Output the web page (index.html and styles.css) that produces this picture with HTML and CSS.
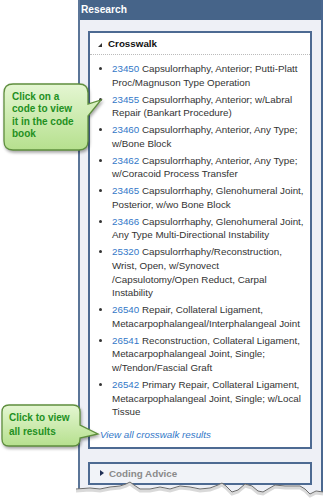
FILE: index.html
```html
<!DOCTYPE html>
<html lang="en">
<head>
    <meta charset="UTF-8">
    <meta name="viewport" content="width=device-width, initial-scale=1.0">
    <title>Research - Crosswalk</title>
    <link rel="stylesheet" href="styles.css">
</head>
<body>
<div class="page">
    <div class="panel">
        <div class="panel-title">Research</div>
        <div class="panel-body">
            <div class="box">
                <div class="box-head"><span class="tri-open"></span>Crosswalk</div>
                <ul class="codes">
                    <li><a href="#">23450</a> Capsulorrhaphy, Anterior; Putti-Platt Proc/Magnuson Type Operation</li>
                    <li><a href="#">23455</a> Capsulorrhaphy, Anterior; w/Labral Repair (Bankart Procedure)</li>
                    <li><a href="#">23460</a> Capsulorrhaphy, Anterior, Any Type; w/Bone Block</li>
                    <li><a href="#">23462</a> Capsulorrhaphy, Anterior, Any Type; w/Coracoid Process Transfer</li>
                    <li><a href="#">23465</a> Capsulorrhaphy, Glenohumeral Joint, Posterior, w/wo Bone Block</li>
                    <li><a href="#">23466</a> Capsulorrhaphy, Glenohumeral Joint, Any Type Multi-Directional Instability</li>
                    <li><a href="#">25320</a> Capsulorrhaphy/Reconstruction, Wrist, Open, w/Synovect<br>/Capsulotomy/Open Reduct, Carpal Instability</li>
                    <li><a href="#">26540</a> Repair, Collateral Ligament, Metacarpophalangeal/Interphalangeal Joint</li>
                    <li><a href="#">26541</a> Reconstruction, Collateral Ligament, Metacarpophalangeal Joint, Single; w/Tendon/Fascial Graft</li>
                    <li><a href="#">26542</a> Primary Repair, Collateral Ligament, Metacarpophalangeal Joint, Single; w/Local Tissue</li>
                </ul>
                <a class="view-all" href="#">View all crosswalk results</a>
            </div>
            <div class="box box-closed">
                <div class="box-head"><span class="tri-closed"></span>Coding Advice</div>
            </div>
        </div>
    </div>

    <!-- notas sobre la captura -->
    <div class="callout callout-code">
        <svg class="callout-shape" width="104" height="72" viewBox="0 0 104 72">
            <defs>
                <linearGradient id="verde1" x1="0" y1="0" x2="0" y2="1">
                    <stop offset="0" stop-color="#e4f6d2"/>
                    <stop offset="1" stop-color="#b6e08e"/>
                </linearGradient>
            </defs>
            <path d="M11,2 H77 Q86,2 86,11 V22 L99,18 L86,34 V59 Q86,68 77,68 H11 Q2,68 2,59 V11 Q2,2 11,2 Z" fill="url(#verde1)" stroke="#5f8f3e" stroke-width="1.3"/>
        </svg>
        <p>Click on a<br>code to view<br>it in the code<br>book</p>
    </div>

    <div class="callout callout-all">
        <svg class="callout-shape" width="104" height="48" viewBox="0 0 104 48">
            <defs>
                <linearGradient id="verde2" x1="0" y1="0" x2="0" y2="1">
                    <stop offset="0" stop-color="#e4f6d2"/>
                    <stop offset="1" stop-color="#b6e08e"/>
                </linearGradient>
            </defs>
            <path d="M9,2 H73 Q80,2 80,9 V22 L98,31 L80,35 V36 Q80,43 73,43 H9 Q2,43 2,36 V9 Q2,2 9,2 Z" fill="url(#verde2)" stroke="#5f8f3e" stroke-width="1.3"/>
        </svg>
        <p>Click to view<br>all results</p>
    </div>

    <!-- borde rasgado -->
    <svg class="torn" width="247" height="26" viewBox="0 0 247 26">
        <path d="M0,11 L14,10 L24,11 L34,9 L44,8 L50,6 L54,4 L58,7 L64,11 L74,11 L84,9 L94,11 L104,8 L114,9 L124,11 L134,10 L142,7 L146,5 L150,8 L156,14 L162,12 L169,6 L176,8 L182,13 L187,14 L192,11 L199,7 L209,8 L224,8 L229,11 L234,16 L240,13 L247,14 L247,26 L0,26 Z" fill="#fff"/>
        <polyline points="0,13 14,12 24,13 34,11 44,10 50,8 54,6 58,9 64,13 74,13 84,11 94,13 104,10 114,11 124,13 134,12 142,9 146,7 150,10 156,16 162,14 169,8 176,10 182,15 187,16 192,13 199,9 209,10 224,10 229,13 234,18 240,15 247,16" fill="none" stroke="rgba(0,0,0,0.15)" stroke-width="3"/>
        <polyline points="0,11 14,10 24,11 34,9 44,8 50,6 54,4 58,7 64,11 74,11 84,9 94,11 104,8 114,9 124,11 134,10 142,7 146,5 150,8 156,14 162,12 169,6 176,8 182,13 187,14 192,11 199,7 209,8 224,8 229,11 234,16 240,13 247,14" fill="none" stroke="#6b6b6b" stroke-width="1"/>
    </svg>
</div>
</body>
</html>
```

FILE: styles.css
```css
body {
    margin: 0;
    font-family: "Liberation Sans", Arial, sans-serif;
    font-size: 9.8px;
    color: #333;
    background-color: #fff;
}

.page {
    position: relative;
    width: 323px;
    height: 504px;
    overflow: hidden;
}

.panel {
    margin-left: 78px;
    height: 504px;
    background-color: #eef0f6;
    border-left: 2px solid #5b7598;
    border-right: 2px solid #4a6890;
}

.panel-title {
    height: 20px;
    line-height: 20px;
    padding-left: 1px;
    background-color: #466489;
    color: #fff;
    font-weight: bold;
    font-size: 10.2px;
}

.panel-body {
    padding: 11px 9px 0 8px;
}

.box {
    background-color: #fff;
    border: 2px solid #4d6a92;
}

.box-head {
    display: flex;
    align-items: center;
    height: 21px;
    padding-left: 8px;
    font-weight: bold;
    color: #111;
    border-bottom: 1px dotted #bbb;
}

.tri-open {
    width: 0;
    height: 0;
    margin-right: 6px;
    margin-top: 2px;
    border-left: 4px solid transparent;
    border-bottom: 4px solid #333;
}

.tri-closed {
    width: 0;
    height: 0;
    margin-right: 5px;
    border-top: 3px solid transparent;
    border-bottom: 3px solid transparent;
    border-left: 4px solid #1f2f55;
}

.codes {
    margin: 0;
    padding: 7px 2px 6px 22px;
    line-height: 13.75px;
}

.codes li {
    margin-bottom: 3px;
}

.codes a {
    color: #3378c8;
    text-decoration: none;
}

.view-all {
    display: block;
    padding: 0 0 5px 10px;
    line-height: 13.7px;
    font-style: italic;
    color: #3378c8;
    text-decoration: none;
}

.box-closed {
    margin-top: 13px;
    background-color: #f1f3f8;
}

.box-closed .box-head {
    height: 19px;
    padding-left: 10px;
    border-bottom: 0;
    color: #8a8a8a;
}

.callout {
    position: absolute;
    z-index: 2;
}

.callout-shape {
    position: absolute;
    left: 0;
    top: 0;
    filter: drop-shadow(1.5px 2px 1.5px rgba(0, 0, 0, 0.35));
}

.callout p {
    position: relative;
    margin: 0;
    font-size: 10px;
    font-weight: bold;
    color: #23901f;
}

.callout-code {
    left: 2px;
    top: 82px;
    width: 104px;
    height: 72px;
}

.callout-code p {
    padding: 9px 0 0 10px;
    line-height: 12.3px;
}

.callout-all {
    left: 0;
    top: 403px;
    width: 104px;
    height: 48px;
}

.callout-all p {
    padding: 8px 0 0 9px;
    line-height: 14px;
}

.torn {
    position: absolute;
    left: 76px;
    top: 478px;
    z-index: 1;
}
```
